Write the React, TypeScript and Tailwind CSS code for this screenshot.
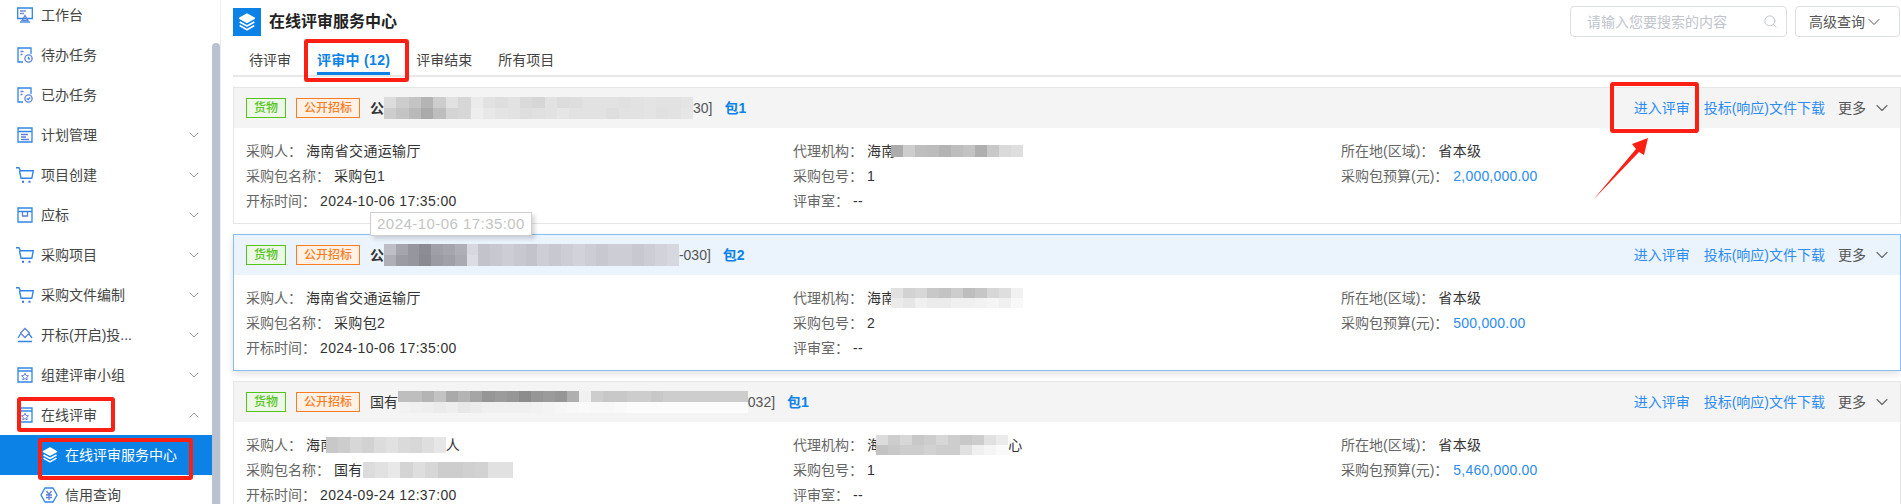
import React from "react";
import { ChevronDown, ChevronUp, Search } from "lucide-react";

const FONT = "[font-family:'Liberation_Sans','Noto_Sans_CJK_SC',sans-serif]";

const IconFrame = ({ children }: { children: React.ReactNode }) => (
  <svg viewBox="0 0 16 16" className="w-4 h-4 shrink-0" fill="none" stroke="#2f86e8" strokeWidth="1.3">
    {children}
  </svg>
);

const DeskIcon = () => (
  <IconFrame>
    <path d="M.7 1h14.6v10.500H.7z" />
    <path d="M3 4h6M3 6.500h4" stroke="#7a8fd8" />
    <path d="M8 8.500l3 5H5z" stroke="#5f7fd8" />
    <path d="M3 15h10" />
  </IconFrame>
);

const TaskIcon = ({ done }: { done?: boolean }) => (
  <IconFrame>
    <path d="M6 15H1V1h13v6" />
    <path d="M3.500 4.500h3M3.500 7.500h2" stroke="#5f7fd8" />
    <circle cx="11.500" cy="11.500" r="3.600" stroke="#5f7fd8" />
    {done ? <path d="M9.800 11.500l1.300 1.200 2-2.200" /> : <path d="M11.500 9.800v2h1.600" />}
  </IconFrame>
);

const PlanIcon = () => (
  <IconFrame>
    <path d="M1 1h14v14H1zM1 4.500h14" />
    <path d="M4 7.500h7M4 10h5M4 12.500h8" stroke="#5f7fd8" />
  </IconFrame>
);

const CartIcon = () => (
  <svg viewBox="0 0 18 16" className="w-[18px] h-4 shrink-0 -ml-[1px] -mr-[1px]" fill="none" stroke="#2f86e8" strokeWidth="1.4">
    <path d="M0 .8h3l1.500 3h12.800l-1.500 7.500H5L3.500 3.500" />
    <path d="M6 14.700h2M12.500 14.700h2" strokeWidth="2" stroke="#3d6fd8" />
  </svg>
);

const BoxIcon = () => (
  <IconFrame>
    <path d="M1 1h14v14H1zM1 4.500h14" />
    <path d="M5.500 4.500v4.500h5V4.500" stroke="#5f7fd8" />
  </IconFrame>
);

const OpenIcon = () => (
  <IconFrame>
    <path d="M8 1.500l4.500 4.500L8 10.500 3.500 6z" stroke="#5f7fd8" />
    <path d="M12 7l3 4M1 14.500h14M3.500 7l-2.500 4" />
  </IconFrame>
);

const StarIcon = () => (
  <IconFrame>
    <path d="M1 1h14v14H1zM1 4h14" />
    <path d="M8 6.300l1.100 2.200 2.400.3-1.800 1.600.5 2.400L8 11.600l-2.200 1.200.5-2.400-1.800-1.600 2.400-.3z" stroke="#5f7fd8" strokeWidth="1" />
  </IconFrame>
);

const LayersIcon = ({ className }: { className: string }) => (
  <svg viewBox="0 0 16 16" className={className} fill="none" stroke="white" strokeWidth="1.5" strokeLinejoin="round">
    <path d="M8 1l6.500 3.600L8 8.200 1.500 4.600z" fill="white" />
    <path d="M1.500 8L8 11.500 14.500 8" />
    <path d="M1.500 11.200L8 14.800l6.500-3.600" />
  </svg>
);

const YuanIcon = () => (
  <svg viewBox="0 0 18 16" className="w-[18px] h-4 shrink-0" fill="none" stroke="#2f86e8" strokeWidth="1.3">
    <path d="M5 1h8l4 7-4 7H5L1 8z" />
    <path d="M6.500 4L9 7.500 11.500 4M6 8h6M6 10.500h6M9 7.500V13" stroke="#5f7fd8" />
  </svg>
);

const menu = [
  { label: "工作台", icon: <DeskIcon /> },
  { label: "待办任务", icon: <TaskIcon /> },
  { label: "已办任务", icon: <TaskIcon done /> },
  { label: "计划管理", icon: <PlanIcon />, arrow: true },
  { label: "项目创建", icon: <CartIcon />, arrow: true },
  { label: "应标", icon: <BoxIcon />, arrow: true },
  { label: "采购项目", icon: <CartIcon />, arrow: true },
  { label: "采购文件编制", icon: <CartIcon />, arrow: true },
  { label: "开标(开启)投...", icon: <OpenIcon />, arrow: true },
  { label: "组建评审小组", icon: <StarIcon />, arrow: true },
];

// gray levels of a pixelated (blurred out) strip
const Mosaic = ({ rows, cell = 12, h = 11, tint = 0, className = "" }: { rows: number[][]; cell?: number; h?: number; tint?: number; className?: string }) => (
  <div className={`flex flex-col shrink-0 ${className}`}>
    {rows.map((row, i) => (
      <div key={i} className="flex">
        {row.map((g, j) => (
          <span key={j} style={{ width: cell, height: h, backgroundColor: `rgb(${g},${g},${g + tint})` }} />
        ))}
      </div>
    ))}
  </div>
);

const Tag = ({ color, children }: { color: "green" | "orange"; children: React.ReactNode }) => (
  <span
    className={
      color === "green"
        ? "h-5 w-10 shrink-0 flex items-center justify-center border border-[#52c41a] bg-[#eef8e8] text-[#52c41a] text-xs font-medium"
        : "h-5 w-16 shrink-0 flex items-center justify-center border border-[#fa7d24] bg-[#fff1e6] text-[#fa7d24] text-xs font-medium"
    }
  >
    {children}
  </span>
);

const Field = ({ label, children, blue }: { label: string; children: React.ReactNode; blue?: boolean }) => (
  <div className="h-[25px] flex items-center whitespace-nowrap">
    <span className="text-[#666666] shrink-0">{label}：</span>
    <span className={blue ? "ml-[5px] flex items-center text-[#2d8cf0] tracking-[0.2px]" : "ml-[4px] flex items-center text-[#333333] tracking-[0.35px]"}>
      {children}
    </span>
  </div>
);

type CardProps = {
  active?: boolean;
  title: React.ReactNode;
  pack: string;
  buyer: React.ReactNode;
  agency: React.ReactNode;
  packName: React.ReactNode;
  packNo: string;
  time: string;
  budget: string;
};

const Card = ({ active, title, pack, buyer, agency, packName, packNo, time, budget }: CardProps) => (
  <div className={active ? "h-[137px] border border-[#84c0f5] shadow-[0_3px_8px_rgba(0,0,0,0.12)] shrink-0" : "h-[137px] border border-[#e6e6e6] shrink-0"}>
    <div className={active ? "h-10 flex items-center pl-3 pr-2 bg-[#ebf3fd]" : "h-10 flex items-center pl-3 pr-2 bg-[#f4f4f4]"}>
      <Tag color="green">货物</Tag>
      <span className="w-[10px]" />
      <Tag color="orange">公开招标</Tag>
      <div className="ml-[10px] flex items-center text-[#333333] whitespace-nowrap">{title}</div>
      <span className="ml-3 font-bold text-[#0c82e6]">{pack}</span>
      <div className="ml-auto flex items-center whitespace-nowrap">
        <span className="text-[#2d8cf0]">进入评审</span>
        <span className="ml-[14px] text-[#2d8cf0]">投标(响应)文件下载</span>
        <span className="ml-[13px] text-[#555555]">更多</span>
        <ChevronDown className="ml-[6px] w-5 h-5 text-[#666666]" strokeWidth={1.3} />
      </div>
    </div>
    <div className="grid grid-cols-[547px_548px_1fr] pl-3 pt-[10px]">
      <Field label="采购人">{buyer}</Field>
      <Field label="代理机构">{agency}</Field>
      <Field label="所在地(区域)">省本级</Field>
      <Field label="采购包名称">{packName}</Field>
      <Field label="采购包号">{packNo}</Field>
      <Field label="采购包预算(元)" blue>{budget}</Field>
      <Field label="开标时间">{time}</Field>
      <Field label="评审室">--</Field>
    </div>
  </div>
);

export default function App() {
  return (
    <div className={`relative h-[504px] w-[1901px] overflow-hidden flex bg-white text-sm ${FONT}`}>
      <aside className="relative w-[221px] shrink-0 border-r border-[#eeeeee] overflow-hidden">
        <div className="-mt-[5px] text-[#444444]">
          {menu.map((m) => (
            <div key={m.label} className="h-10 w-[212px] flex items-center pl-[17px] pr-[10px]">
              {m.icon}
              <span className="ml-2 whitespace-nowrap">{m.label}</span>
              {m.arrow && <ChevronDown className="ml-auto w-4 h-4 text-[#999999]" strokeWidth={1.5} />}
            </div>
          ))}
          <div className="h-[40px] w-[212px] flex items-center pl-[17px] pr-[10px]">
            <StarIcon />
            <span className="ml-2 relative z-10">在线评审</span>
            <ChevronUp className="ml-auto w-4 h-4 text-[#999999]" strokeWidth={1.5} />
          </div>
          <div className="h-10 w-[212px] flex items-center pl-[42px] bg-[#0c82e6] text-white">
            <LayersIcon className="w-4 h-4" />
            <span className="ml-[7px] whitespace-nowrap">在线评审服务中心</span>
          </div>
          <div className="h-10 w-[212px] flex items-center pl-[40px]">
            <YuanIcon />
            <span className="ml-[7px]">信用查询</span>
          </div>
        </div>
        <div className="absolute left-[212px] top-[43px] bottom-0 w-2 rounded-t bg-[#b9c2d3]" />
      </aside>

      <main className="flex-1 min-w-0 pl-3">
        <header className="h-[38px] pt-2 flex items-start">
          <div className="w-7 h-7 bg-[#0c82e6] flex items-center justify-center">
            <LayersIcon className="w-[18px] h-[18px]" />
          </div>
          <h1 className="ml-2 text-base font-bold leading-7 text-[#222222]">在线评审服务中心</h1>
          <div className="ml-auto -mt-[2px] mr-[1px] flex items-center gap-2">
            <div className="w-[217px] h-[31px] border border-[#dcdfe6] rounded flex items-center pl-4 pr-2 text-[#c0c4cc]">
              <span>请输入您要搜索的内容</span>
              <Search className="ml-auto w-[15px] h-[15px]" strokeWidth={1.5} />
            </div>
            <div className="w-[105px] h-[31px] border border-[#dcdfe6] rounded flex items-center pl-[13px] text-[#555555]">
              <span>高级查询</span>
              <ChevronDown className="-ml-[1px] w-5 h-5" strokeWidth={1.2} />
            </div>
          </div>
        </header>
        <nav className="h-[39px] border-b-2 border-[#e8e8e8] flex pl-4 text-[#444444]">
          <span className="leading-[44px]">待评审</span>
          <span className="ml-[26px] h-[37px] leading-[44px] font-bold tracking-[0.3px] text-[#0c82e6] border-b-[3px] border-[#0c82e6]">评审中 (12)</span>
          <span className="ml-[26px] leading-[44px]">评审结束</span>
          <span className="ml-[26px] leading-[44px]">所有项目</span>
        </nav>
        <div className="mt-[10px] flex flex-col gap-[10px]">
          <Card
            title={
              <>
                <span className="font-bold w-[14px]">公</span>
                <Mosaic
                  cell={12.36}
                  rows={[
                    [220, 205, 196, 180, 205, 225, 215, 235, 226, 222, 226, 218, 214, 226, 220, 222, 226, 226, 226, 224, 226, 228, 226, 226, 228],
                    [205, 196, 185, 170, 190, 212, 215, 238, 232, 228, 226, 222, 224, 226, 230, 226, 226, 226, 222, 226, 226, 228, 224, 226, 230],
                  ]}
                />
                <span className="text-[#555555]">30]</span>
              </>
            }
            pack="包1"
            buyer="海南省交通运输厅"
            agency={
              <>
                <span>海南</span>
                <Mosaic className="-ml-[5px]" rows={[[172, 205, 190, 188, 180, 190, 195, 175, 200, 218, 222]]} h={12} />
              </>
            }
            packName="采购包1"
            packNo="1"
            time="2024-10-06 17:35:00"
            budget="2,000,000.00"
          />
          <Card
            active
            title={
              <>
                <span className="font-bold">公</span>
                <Mosaic
                  tint={8}
                  cell={11.8}
                  rows={[
                    [190, 165, 150, 140, 160, 165, 175, 215, 195, 200, 205, 200, 195, 205, 200, 205, 210, 205, 200, 205, 205, 200, 205, 210, 215],
                    [175, 155, 150, 138, 155, 160, 170, 220, 195, 200, 205, 200, 195, 205, 200, 205, 210, 205, 200, 205, 205, 200, 205, 210, 215],
                  ]}
                />
                <span className="text-[#555555]">-030]</span>
              </>
            }
            pack="包2"
            buyer="海南省交通运输厅"
            agency={
              <>
                <span>海南</span>
                <Mosaic
                  className="-ml-[5px]"
                  rows={[
                    [225, 210, 215, 200, 195, 205, 190, 198, 215, 222, 240],
                    [235, 230, 240, 235, 235, 240, 240, 242, 245, 240, 248],
                  ]}
                  h={10}
                />
              </>
            }
            packName="采购包2"
            packNo="2"
            time="2024-10-06 17:35:00"
            budget="500,000.00"
          />
          <Card
            title={
              <>
                <span>国有</span>
                <Mosaic
                  cell={12.07}
                  rows={[
                    [190, 190, 180, 195, 170, 180, 165, 150, 155, 150, 140, 150, 155, 150, 175, 240, 205, 200, 200, 205, 205, 200, 205, 205, 205, 205, 205, 205, 205],
                    [242, 240, 238, 235, 238, 232, 236, 240, 240, 240, 240, 242, 244, 246, 248, 250, 248, 248, 250, 252, 252, 252, 252, 252, 252, 252, 252, 252, 252],
                  ]}
                />
                <span className="text-[#555555]">032]</span>
              </>
            }
            pack="包1"
            buyer={
              <>
                <span>海南</span>
                <Mosaic className="-ml-[9px]" rows={[[200, 205, 215, 210, 220, 225, 218, 215, 222, 230]]} h={16} />
                <span>人</span>
              </>
            }
            agency={
              <>
                <span>海</span>
                <Mosaic className="-ml-[5px]" rows={[[220, 205, 215, 200, 205, 215, 205, 200, 205, 225, 235], [195, 200, 205, 205, 210, 205, 205, 225, 240, 245, 250]]} h={10} />
                <span>心</span>
              </>
            }
            packName={
              <>
                <span>国有</span>
                <Mosaic rows={[[220, 225, 232, 212, 222, 215, 205, 205, 208, 210, 225, 225]]} h={16} cell={12.5} />
              </>
            }
            packNo="1"
            time="2024-09-24 12:37:00"
            budget="5,460,000.00"
          />
        </div>
      </main>

      {/* tooltip over the first card */}
      <div className="absolute left-[370px] top-[212px] w-[162px] h-6 flex items-center justify-center bg-white border border-[#cfcfcf] shadow-[3px_3px_4px_rgba(0,0,0,0.15)] text-[15px] tracking-[0.45px] text-[#c4c4c4]">
        2024-10-06 17:35:00
      </div>

      {/* red annotations drawn on top of the screenshot */}
      <div className="absolute left-[17px] top-[397px] w-[98px] h-[35px] border-4 border-[#fb1f14] rounded-[3px]" />
      <div className="absolute left-[38px] top-[438px] w-[155px] h-[42px] border-4 border-[#fb1f14] rounded-[3px]" />
      <div className="absolute left-[304px] top-[39px] w-[105px] h-[43px] border-4 border-[#fb1f14] rounded-[3px]" />
      <div className="absolute left-[1610px] top-[82px] w-[89px] h-[51px] border-4 border-[#fb1f14] rounded-[3px]" />
      <svg className="absolute left-[1590px] top-[135px]" width="62" height="68" viewBox="0 0 62 68">
        <path d="M3 65L46 14l-4-5L58 3l-4 17-5-3L3 65z" fill="#fb1f14" />
      </svg>
    </div>
  );
}
